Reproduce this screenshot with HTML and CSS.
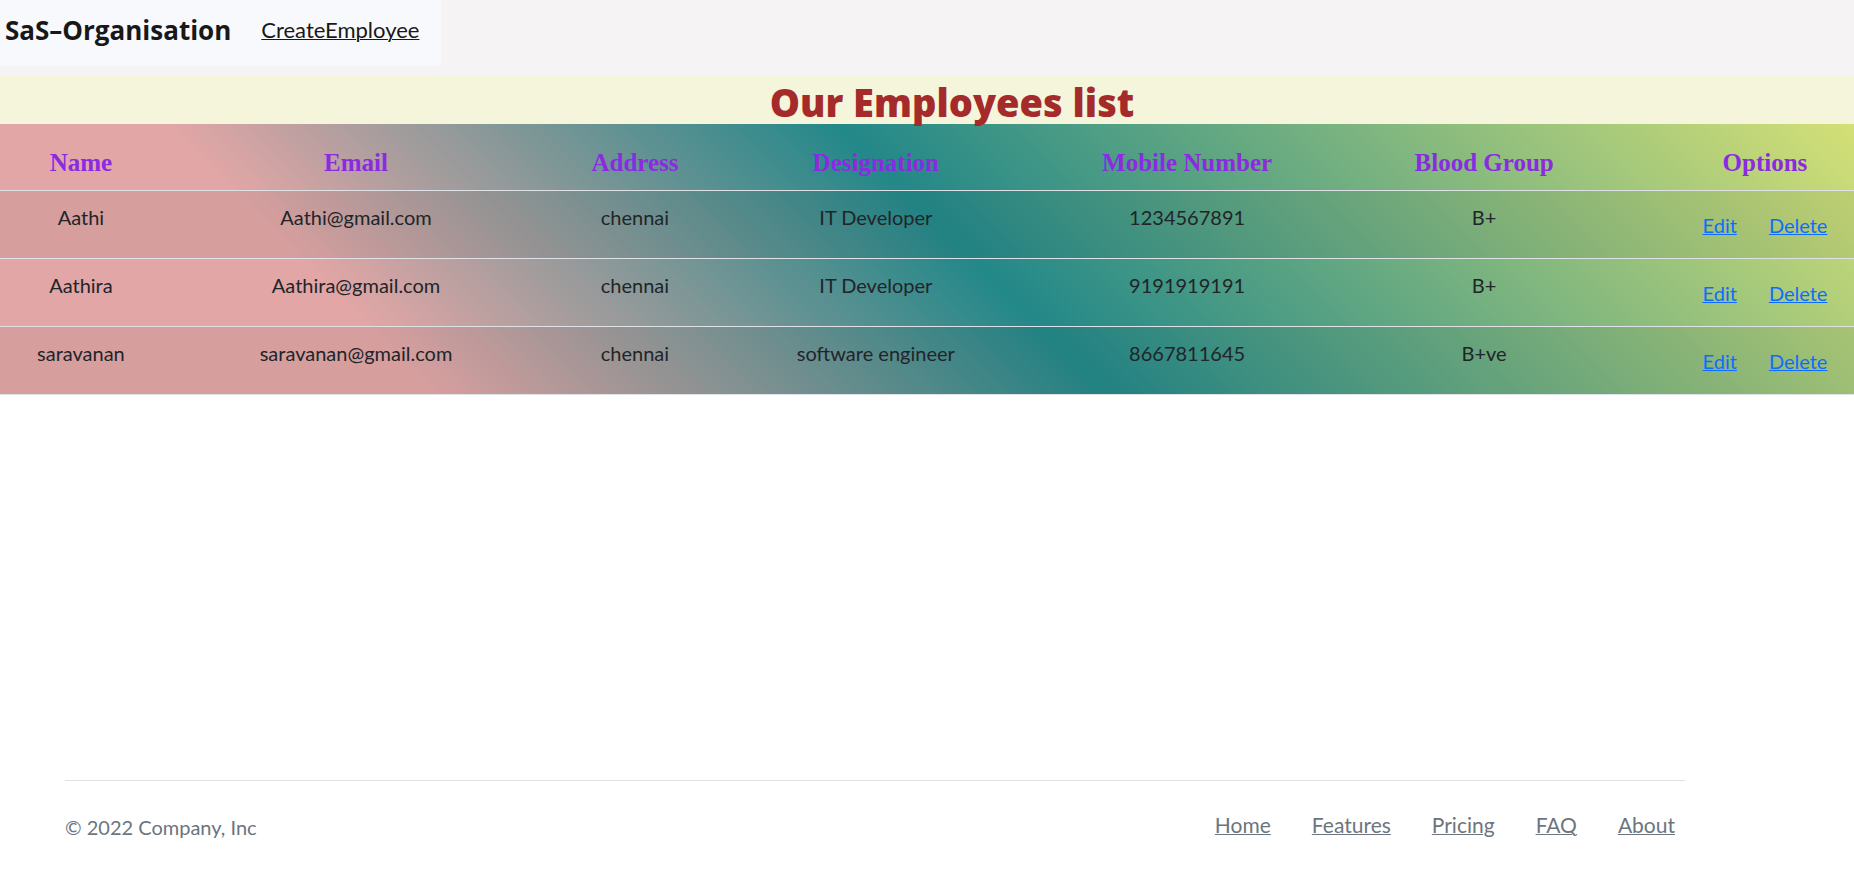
FILE: index.html
```html
<!DOCTYPE html>
<html lang="en">
<head>
<meta charset="utf-8">
<title>SaS-Organisation</title>
<link rel="stylesheet" href="styles.css">
</head>
<body>
<header class="topbar">
  <nav class="nav">
    <span class="brand">SaS–Organisation</span>
    <a class="nav-link" href="#create">CreateEmployee</a>
  </nav>
</header>
<main class="content">
  <h1 class="title">Our Employees list</h1>
  <table class="employees">
    <colgroup>
      <col class="c-name"><col class="c-email"><col class="c-address"><col class="c-role"><col class="c-mobile"><col class="c-blood"><col class="c-options">
    </colgroup>
    <thead>
      <tr><th>Name</th><th>Email</th><th>Address</th><th>Designation</th><th>Mobile Number</th><th>Blood Group</th><th>Options</th></tr>
    </thead>
    <tbody>
      <tr><td>Aathi</td><td>Aathi@gmail.com</td><td>chennai</td><td>IT Developer</td><td>1234567891</td><td>B+</td><td class="options"><a href="#edit">Edit</a><a href="#delete">Delete</a></td></tr>
      <tr><td>Aathira</td><td>Aathira@gmail.com</td><td>chennai</td><td>IT Developer</td><td>9191919191</td><td>B+</td><td class="options"><a href="#edit">Edit</a><a href="#delete">Delete</a></td></tr>
      <tr><td>saravanan</td><td>saravanan@gmail.com</td><td>chennai</td><td>software engineer</td><td>8667811645</td><td>B+ve</td><td class="options"><a href="#edit">Edit</a><a href="#delete">Delete</a></td></tr>
    </tbody>
  </table>
</main>
<footer class="footer">
  <p class="copyright">© 2022 Company, Inc</p>
  <nav class="footer-links">
    <a href="#home">Home</a>
    <a href="#features">Features</a>
    <a href="#pricing">Pricing</a>
    <a href="#faq">FAQ</a>
    <a href="#about">About</a>
  </nav>
</footer>
</body>
</html>
```
FILE: styles.css
```css
* { box-sizing: border-box; }
body {
  margin: 0;
  min-height: 100vh;
  display: flex;
  flex-direction: column;
  overflow-x: hidden;
  background: #fff;
  color: #212529;
  font-family: Lato, "Open Sans", sans-serif;
  font-size: 20px;
  line-height: 28px;
}
.topbar { display: flex; padding-bottom: 10px; background: #f5f3f4; }
.nav {
  display: flex;
  align-items: center;
  gap: 30px;
  padding: 14px 22px 20px 5px;
  background: #f8f9fc;
}
.brand {
  color: #181818;
  font-family: "Open Sans", sans-serif;
  font-size: 26px;
  font-weight: 700;
  line-height: 32px;
}
.nav-link { color: #181818; font-size: 22px; text-decoration-thickness: 1px; }
.content { margin-right: -50px; }
.title {
  height: 48px;
  margin: 0;
  background: #f5f5dc;
  color: #a52a2a;
  font-family: "Open Sans", sans-serif;
  font-size: 38px;
  font-weight: 800;
  line-height: 52px;
  text-align: center;
}
.employees {
  width: 100%;
  table-layout: fixed;
  border-collapse: collapse;
  background: linear-gradient(45deg, #e3a6a6 20%, #238889 51%, #dde475 100%);
  text-align: center;
}
.c-name { width: 8.5%; }
.c-email { width: 20.4%; }
.c-address { width: 8.9%; }
.c-role { width: 16.4%; }
.c-mobile { width: 16.3%; }
.c-blood { width: 14.9%; }
.employees th {
  padding: 25px 0 13px;
  border-bottom: 1px solid #dee2e6;
  color: #8a2be2;
  font-family: "Liberation Serif", serif;
  font-size: 25px;
  font-weight: 700;
}
.employees td {
  height: 68px;
  padding: 12px 0 0;
  border-bottom: 1px solid #dee2e6;
  vertical-align: top;
}
.employees tbody tr:nth-child(odd) { background: rgba(33, 37, 41, 0.06); }
.employees .options { padding-top: 20px; }
.options a { margin: 0 16px; color: #0d6efd; text-decoration-thickness: 1px; }
.footer {
  display: flex;
  justify-content: space-between;
  align-items: center;
  margin: auto 169px 26px 65px;
  padding: 28px 10px 12px 0;
  border-top: 1px solid #dee2e6;
  color: #6c757d;
}
.copyright { margin: 4px 0 0; }
.footer-links { display: flex; gap: 41px; }
.footer-links a { color: #6c757d; font-size: 21px; text-decoration-thickness: 1px; }
```
